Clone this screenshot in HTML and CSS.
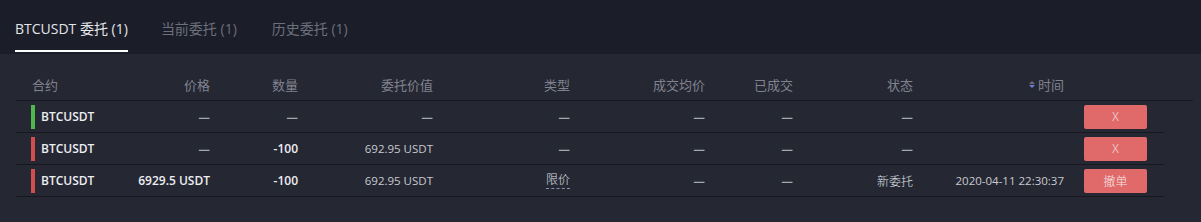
FILE: index.html
```html
<!DOCTYPE html>
<html lang="zh-CN">
<head>
    <meta charset="UTF-8">
    <meta name="viewport" content="width=device-width, initial-scale=1.0">
    <title>委托</title>
    <link rel="stylesheet" href="styles.css">
</head>
<body>
    <div class="tabs">
        <div class="tab active">BTCUSDT 委托 (1)</div>
        <div class="tab">当前委托 (1)</div>
        <div class="tab">历史委托 (1)</div>
    </div>

    <div class="panel">
        <div class="row head">
            <div class="cell first">合约</div>
            <div class="cell">价格</div>
            <div class="cell">数量</div>
            <div class="cell">委托价值</div>
            <div class="cell">类型</div>
            <div class="cell">成交均价</div>
            <div class="cell">已成交</div>
            <div class="cell">状态</div>
            <div class="cell"><span class="sort"><i class="up"></i><i class="down"></i></span>时间</div>
            <div class="cell"></div>
        </div>

        <div class="row">
            <div class="cell first"><span class="bar green"></span><b>BTCUSDT</b></div>
            <div class="cell dash">—</div>
            <div class="cell dash">—</div>
            <div class="cell dash">—</div>
            <div class="cell dash">—</div>
            <div class="cell dash">—</div>
            <div class="cell dash">—</div>
            <div class="cell dash">—</div>
            <div class="cell"></div>
            <div class="cell action"><button class="cancel">X</button></div>
        </div>

        <div class="row">
            <div class="cell first"><span class="bar red"></span><b>BTCUSDT</b></div>
            <div class="cell dash">—</div>
            <div class="cell"><b>-100</b></div>
            <div class="cell">692.95 USDT</div>
            <div class="cell dash">—</div>
            <div class="cell dash">—</div>
            <div class="cell dash">—</div>
            <div class="cell dash">—</div>
            <div class="cell"></div>
            <div class="cell action"><button class="cancel">X</button></div>
        </div>

        <div class="row">
            <div class="cell first"><span class="bar red"></span><b>BTCUSDT</b></div>
            <div class="cell"><b>6929.5 USDT</b></div>
            <div class="cell"><b>-100</b></div>
            <div class="cell">692.95 USDT</div>
            <div class="cell"><span class="tip">限价</span></div>
            <div class="cell dash">—</div>
            <div class="cell dash">—</div>
            <div class="cell status">新委托</div>
            <div class="cell">2020-04-11 22:30:37</div>
            <div class="cell action"><button class="cancel">撤单</button></div>
        </div>
    </div>
</body>
</html>
```

FILE: styles.css
```css
body {
    margin: 0;
    padding: 0;
    background-color: #252733;
    font-family: "Open Sans", "Noto Sans CJK SC", sans-serif;
    color: #d4d5da;
    height: 222px;
    overflow: hidden;
}

.tabs {
    display: flex;
    height: 54px;
    padding-left: 15px;
    background-color: #1b1d28;
    box-sizing: border-box;
}

.tab {
    display: flex;
    align-items: center;
    height: 52px;
    margin-right: 35px;
    font-size: 14px;
    color: #6c6f7c;
    box-sizing: border-box;
    border-bottom: 2px solid transparent;
    padding-top: 6px;
}

.tab.active {
    color: #e4e5ea;
    border-bottom-color: #ffffff;
    margin-right: 33px;
}

.panel {
    padding: 16px 0 0 16px;
}

.row {
    display: grid;
    grid-template-columns: 114px 80px 88px 135px 137px 135px 88px 120px 151px 100px;
    width: 1148px;
    height: 32px;
    align-items: center;
    border-bottom: 1px solid #16171f;
    box-sizing: border-box;
    font-size: 11.5px;
    color: #c9cad0;
}

.row.head {
    width: 1177px;
    height: 31px;
    font-size: 13px;
    color: #80838f;
    padding-bottom: 2px;
}

.cell {
    text-align: right;
    white-space: nowrap;
    display: flex;
    justify-content: flex-end;
    align-items: center;
}

.cell.first {
    justify-content: flex-start;
    padding-left: 15px;
}

.row.head .cell.first {
    padding-left: 16px;
}

.cell b {
    font-size: 12px;
    font-weight: 600;
    color: #eceef2;
}

.bar {
    display: inline-block;
    width: 4px;
    height: 24px;
    margin-right: 6px;
}

.bar.green {
    background-color: #4fb84d;
}

.bar.red {
    background-color: #d04e4e;
}

.dash {
    font-family: "Noto Sans CJK SC", sans-serif;
    font-size: 13px;
    font-weight: 700;
    color: #a4a6b0;
}

.status {
    font-size: 12px;
    font-weight: 300;
    color: #dfe0e5;
}

.tip {
    font-size: 12px;
    font-weight: 300;
    color: #dfe0e5;
    border-bottom: 1px dashed #8a90b0;
    line-height: 16px;
}

.sort {
    display: inline-flex;
    flex-direction: column;
    margin-right: 3px;
}

.sort i {
    display: block;
    width: 0;
    height: 0;
    border-left: 3px solid transparent;
    border-right: 3px solid transparent;
}

.sort .up {
    border-bottom: 3px solid #6b6e7a;
    margin-bottom: 1px;
}

.sort .down {
    border-top: 3px solid #6f7fe0;
}

.action {
    justify-content: flex-start;
    padding-left: 20px;
}

.cancel {
    width: 63px;
    height: 24px;
    border: none;
    border-radius: 2px;
    background-color: #e06a6a;
    color: #f5e6e6;
    font-family: "Open Sans", "Noto Sans CJK SC", sans-serif;
    font-size: 12px;
    font-weight: 300;
    padding: 0;
    cursor: pointer;
}
```
